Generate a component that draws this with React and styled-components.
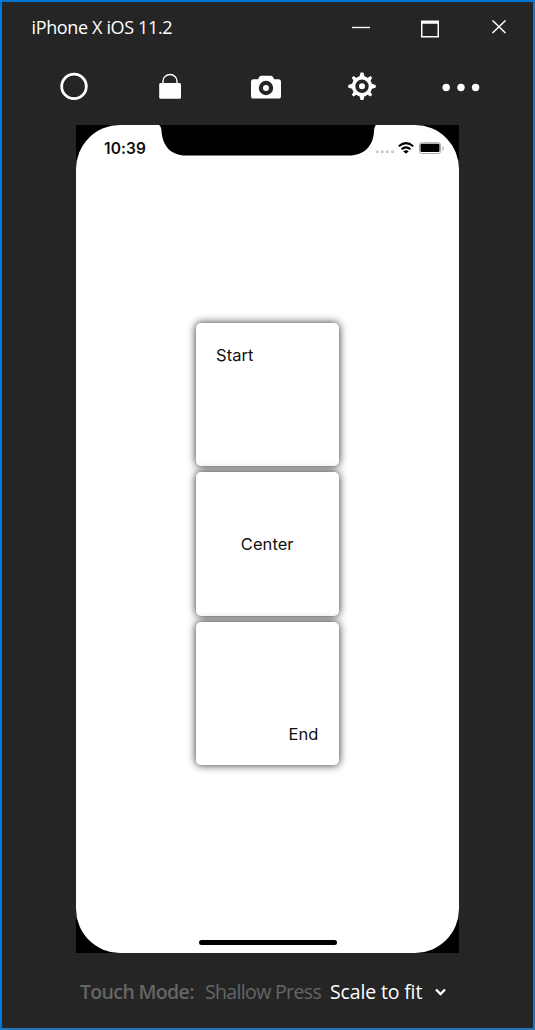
import React from 'react';
import styled, { createGlobalStyle } from 'styled-components';

const GlobalStyle = createGlobalStyle`
  *, *::before, *::after { box-sizing: border-box; }
  body { margin: 0; background: #252525; }
`;

const Window = styled.main`
  width: 535px;
  height: 1030px;
  display: flex;
  flex-direction: column;
  background: #252525;
  border: 2px solid #0078d7;
  border-right-color: #2376b9;
  border-bottom-color: #2376b9;
  color: #fff;
  font-family: "Open Sans", "Noto Sans", sans-serif;
  overflow: hidden;
`;

const TitleBar = styled.header`
  height: 50px;
  flex: none;
  display: flex;
  justify-content: space-between;
  padding: 0 21px 0 29.5px;
`;

const Title = styled.h1`
  margin: 0;
  padding-top: 13px;
  font-size: 18px;
  line-height: 24px;
  font-weight: 400;
  letter-spacing: -0.36px;
  white-space: nowrap;
`;

const WindowButtons = styled.div`
  display: flex;
  gap: 45px;
  padding-top: 13px;
`;

const IconButton = styled.button`
  display: block;
  width: ${(p) => p.$w}px;
  height: ${(p) => p.$h}px;
  padding: 0;
  border: 0;
  background: none;
  color: #fff;
  svg { display: block; }
`;

const Toolbar = styled.nav`
  height: 73px;
  flex: none;
  display: flex;
  gap: 56px;
  padding: 14px 0 0 52px;
`;

const Screen = styled.section`
  width: 383px;
  height: 828px;
  flex: none;
  margin-left: 74px;
  background: #000;
`;

const Display = styled.div`
  width: 100%;
  height: 100%;
  display: flex;
  flex-direction: column;
  background: #fff;
  border-radius: 44px;
  overflow: hidden;
  color: #111;
  font-family: Inter, "Liberation Sans", sans-serif;
`;

const StatusBar = styled.div`
  height: 32px;
  flex: none;
  display: flex;
`;

const Time = styled.time`
  width: 83px;
  padding: 14px 0 0 28px;
  font-size: 15.5px;
  line-height: 20px;
  font-weight: 600;
  letter-spacing: 0.1px;
`;

const Indicators = styled.div`
  display: flex;
  padding: 15px 0 0 0;
`;

const Cards = styled.div`
  display: flex;
  flex-direction: column;
  align-items: center;
  gap: 6px;
  padding-top: 166px;
`;

const Card = styled.div`
  width: 143px;
  height: 143.3px;
  display: flex;
  align-items: ${(p) => p.$align};
  justify-content: ${(p) => p.$align};
  padding: 20px 20.5px 19px 20px;
  background: #fff;
  border-radius: 5px;
  box-shadow: 0 0 9px rgba(0, 0, 0, 0.85);
  font-size: 16.5px;
  line-height: 24px;
  letter-spacing: 0.05px;
`;

const HomeBar = styled.div`
  width: 138px;
  height: 5px;
  margin: auto auto 8px;
  border-radius: 3px;
  background: #000;
`;

const Footer = styled.footer`
  display: flex;
  padding: 25px 0 0 78px;
  font-size: 19.5px;
  line-height: 28px;
  white-space: nowrap;
`;

const ModeLabel = styled.span`
  width: 125px;
  color: #666;
  font-weight: 600;
  letter-spacing: -0.65px;
`;

const Mode = styled.span`
  width: 125px;
  color: #666;
  letter-spacing: -0.65px;
`;

const Scale = styled.button`
  display: flex;
  align-items: flex-start;
  padding: 0;
  border: 0;
  background: none;
  color: #fff;
  font: inherit;
  letter-spacing: -0.15px;
`;

const ScaleLabel = styled.span`
  width: 105px;
  text-align: left;
`;

const Chevron = styled.svg`
  margin-top: 10px;
`;

const teeth = [0, 45, 90, 135, 180, 225, 270, 315];

export default function App() {
  return (
    <>
      <GlobalStyle />
      <Window>
        <TitleBar>
          <Title>iPhone X iOS 11.2</Title>
          <WindowButtons>
            <IconButton $w={24} $h={30} aria-label="Minimize">
              <svg width="24" height="30"><path d="M2 12.5h18" stroke="#fff" strokeWidth="1.4" /></svg>
            </IconButton>
            <IconButton $w={24} $h={30} aria-label="Maximize">
              <svg width="24" height="30"><path fillRule="evenodd" fill="#fff" d="M2 5.5h18v17H2zM3.5 8.8v12.3h15V8.8z" /></svg>
            </IconButton>
            <IconButton $w={24} $h={30} aria-label="Close">
              <svg width="24" height="30"><path d="M4.5 5.5l13 12.5M17.5 5.5L4.5 18" stroke="#fff" strokeWidth="1.5" /></svg>
            </IconButton>
          </WindowButtons>
        </TitleBar>
        <Toolbar>
          <IconButton $w={40} $h={40} aria-label="Home">
            <svg width="40" height="40"><circle cx="20" cy="20.4" r="12.3" fill="none" stroke="#fff" strokeWidth="2.8" /></svg>
          </IconButton>
          <IconButton $w={40} $h={40} aria-label="Lock">
            <svg width="40" height="40">
              <path d="M13 18v-3a7 6.5 0 0 1 14 0v3" fill="none" stroke="#fff" strokeWidth="1.4" />
              <rect x="9.2" y="17" width="21.8" height="15.7" rx="1.5" fill="#fff" />
            </svg>
          </IconButton>
          <IconButton $w={40} $h={40} aria-label="Screenshot">
            <svg width="40" height="40">
              <path fill="#fff" d="M7.5 13.2H12L13.2 11Q14 9.8 15.5 9.8H24.7Q26.2 9.8 27 11L28.2 13.2H32.5Q35 13.2 35 15.7V30Q35 32.6 32.5 32.6H7.5Q5 32.6 5 30V15.7Q5 13.2 7.5 13.2Z" />
              <circle cx="20" cy="22" r="5.1" fill="#fff" stroke="#252525" strokeWidth="4.2" />
            </svg>
          </IconButton>
          <IconButton $w={40} $h={40} aria-label="Settings">
            <svg width="40" height="40">
              <g transform="translate(20 20.3)">
                {teeth.map((a) => (
                  <path key={a} transform={`rotate(${a})`} fill="#fff" d={a % 90 ? 'M-2.2-9L-1.2-13.2H1.2L2.2-9z' : 'M-2.8-9L-1.4-13.7H1.4L2.8-9z'} />
                ))}
                <circle r="8.5" fill="none" stroke="#fff" strokeWidth="3.6" />
                <circle r="3" fill="#fff" />
              </g>
            </svg>
          </IconButton>
          <IconButton $w={44} $h={40} aria-label="More">
            <svg width="44" height="40">
              <circle cx="8.2" cy="21.5" r="3.7" fill="#fff" />
              <circle cx="23" cy="21.5" r="3.7" fill="#fff" />
              <circle cx="37.6" cy="21.5" r="3.7" fill="#fff" />
            </svg>
          </IconButton>
        </Toolbar>
        <Screen>
          <Display>
            <StatusBar>
              <Time>10:39</Time>
              <svg width="217" height="32">
                <path d="M0 0Q2 1 2.5 6C3.5 21 12 30.5 27 30.5H190C205 30.5 214.5 21 215 6Q215.5 1 217 0Z" />
              </svg>
              <Indicators>
                <svg width="72" height="17">
                  <g fill="#c8c8c8">
                    <circle cx="1.3" cy="11.8" r="1.5" />
                    <circle cx="6.2" cy="11.8" r="1.5" />
                    <circle cx="11.3" cy="11.8" r="1.5" />
                    <circle cx="16.5" cy="11.8" r="1.5" />
                  </g>
                  <g fill="none" stroke="#000" strokeWidth="2">
                    <path d="M22.8 6.3Q30 0 37.2 6.300" />
                    <path d="M25.500 9.300Q30 5.500 34.500 9.300" />
                  </g>
                  <path d="M27.2 11.200Q30 9.500 32.800 11.200L30 13.700Z" />
                  <rect x="43.5" y="2.700" width="21" height="10.800" rx="2" fill="#fff" stroke="#aaa" />
                  <rect x="44.5" y="3.800" width="19" height="8.200" rx="1" />
                  <path d="M67 6.5v4" stroke="#999" />
                </svg>
              </Indicators>
            </StatusBar>
            <Cards>
              <Card $align="flex-start">Start</Card>
              <Card $align="center">Center</Card>
              <Card $align="flex-end">End</Card>
            </Cards>
            <HomeBar />
          </Display>
        </Screen>
        <Footer>
          <ModeLabel>Touch Mode:</ModeLabel>
          <Mode>Shallow Press</Mode>
          <Scale>
            <ScaleLabel>Scale to fit</ScaleLabel>
            <Chevron width="14" height="12"><path d="M1 1.5l4.5 4.5L10 1.5" fill="none" stroke="#fff" strokeWidth="2.3" /></Chevron>
          </Scale>
        </Footer>
      </Window>
    </>
  );
}
